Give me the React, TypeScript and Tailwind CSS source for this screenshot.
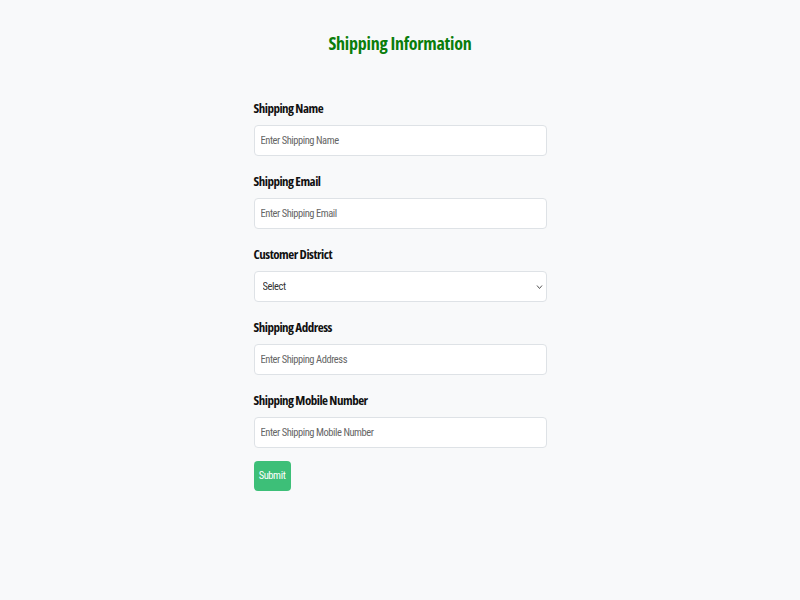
const fields = [
  { label: 'Shipping Name', placeholder: 'Enter Shipping Name' },
  { label: 'Shipping Email', placeholder: 'Enter Shipping Email' },
  { label: 'Customer District', select: true },
  { label: 'Shipping Address', placeholder: 'Enter Shipping Address' },
  { label: 'Shipping Mobile Number', placeholder: 'Enter Shipping Mobile Number' },
]

const App = () => (
  <div className="min-h-[600px] bg-[#f8f9fa] font-['Open_Sans',sans-serif] [font-stretch:condensed]">
    <h2 className="pt-[31px] text-center text-[18px] font-bold leading-6 tracking-[-0.25px] text-[#0a7d0a]">
      Shipping Information
    </h2>
    <form className="mx-auto mt-[45px] flex w-[293px] flex-col" onSubmit={(e) => e.preventDefault()}>
      {fields.map((f) => (
        <div key={f.label} className="mb-[17px] flex flex-col">
          <label className="mb-[9px] text-[13px] font-bold leading-4 tracking-[-0.5px] text-[#111]">{f.label}</label>
          {f.select ? (
            <div className="relative">
              <select className="h-[31px] w-full appearance-none rounded border border-[#dee2e6] bg-white px-2 font-['Roboto',sans-serif] text-[10.5px] tracking-[-0.4px] text-[#333] [font-stretch:condensed]">
                <option>Select</option>
              </select>
              <svg className="pointer-events-none absolute right-[4px] top-[13px] h-[6px] w-[7px]" viewBox="0 0 7 6" fill="none" stroke="#555" strokeWidth="1">
                <path d="M1 1.5l2.5 3 2.5-3" />
              </svg>
            </div>
          ) : (
            <input
              className="h-[31px] w-full rounded border border-[#dee2e6] bg-white px-[6px] font-['Roboto',sans-serif] text-[10.5px] tracking-[-0.45px] text-[#333] [font-stretch:condensed] placeholder:text-[#666]"
              placeholder={f.placeholder}
            />
          )}
        </div>
      ))}
      <button
        type="submit"
        className="-mt-[4px] h-[30px] w-[37px] rounded bg-[#3dbf78] font-['Roboto',sans-serif] text-[10.5px] tracking-[-0.4px] text-white [font-stretch:condensed]"
      >
        Submit
      </button>
    </form>
  </div>
)

export default App
